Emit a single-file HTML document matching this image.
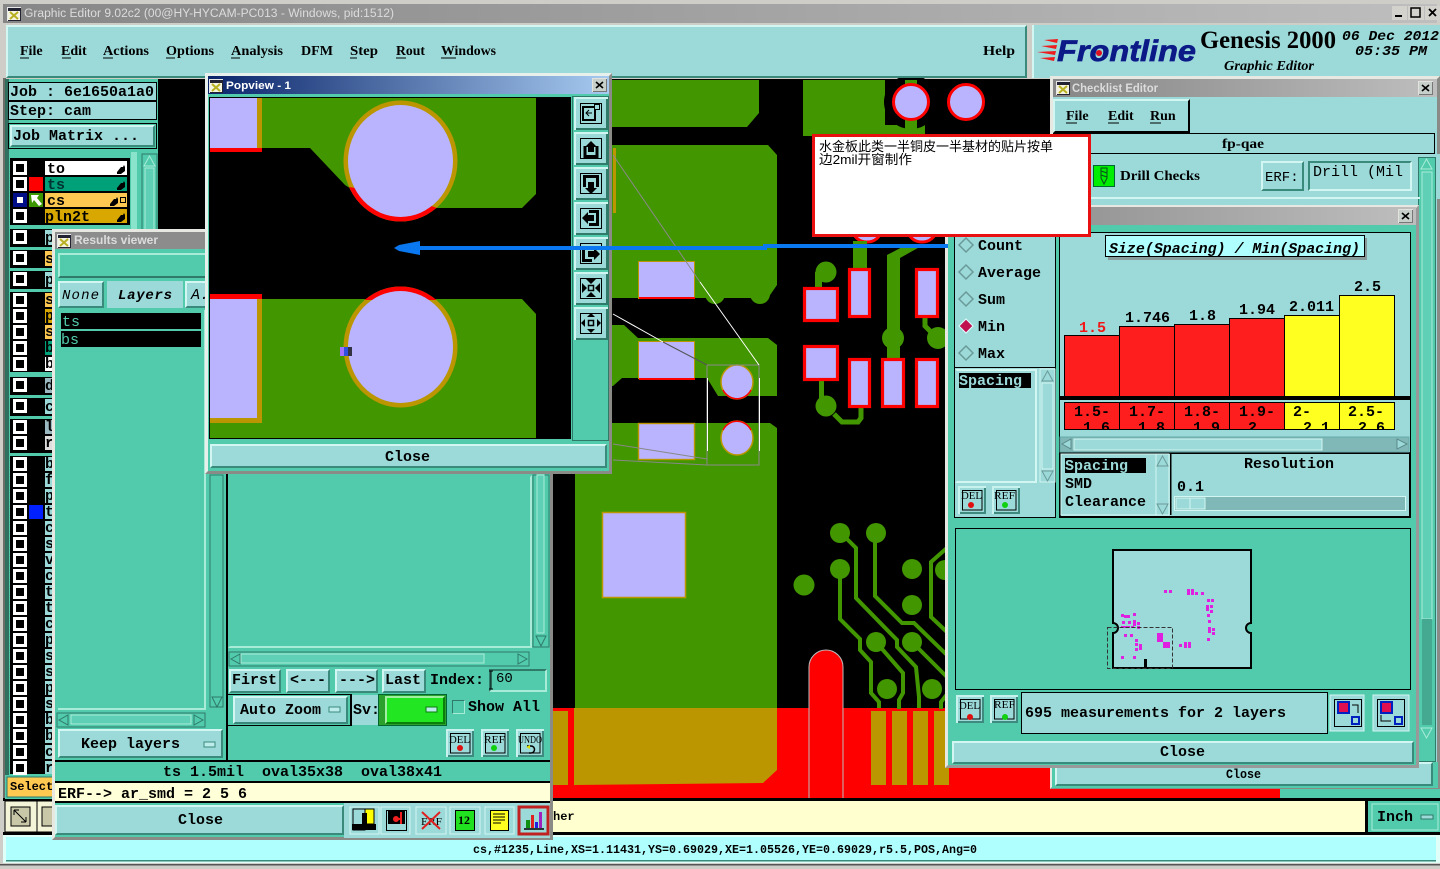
<!DOCTYPE html>
<html><head><meta charset="utf-8"><title>Graphic Editor</title>
<style>
*{box-sizing:border-box;margin:0;padding:0}
html,body{width:1440px;height:869px;overflow:hidden}
body{position:relative;background:#cfcdc8}
div{position:absolute}
svg{position:absolute;left:0;top:0;overflow:visible}
text{font:bold 15px "Liberation Mono",monospace;fill:#000;white-space:pre}
.se{font:bold 14px "Liberation Serif",serif}
.sa{font:bold 11px "Liberation Sans",sans-serif}
.t{background:#9cdada}
.m{background:#52cbad}
.b{background:#9cdada;border:2px solid;border-color:#d2f6f2 #3a8a7c #3a8a7c #d2f6f2}
.g{background:#52cbad;border:2px solid;border-color:#a8ecd8 #2f7a68 #2f7a68 #a8ecd8}
.s{background:#52cbad;border:2px solid;border-color:#2f7a68 #a8ecd8 #a8ecd8 #2f7a68}
.k{border:1px solid #000}
.w{background:#52cbad;border:3px solid;border-color:#e8e8e2 #8a8a86 #8a8a86 #e8e8e2}
</style></head><body>
<svg width="1440" height="869" viewBox="0 0 1440 869">
<defs>
<linearGradient id="gy"><stop offset="0" stop-color="#868686"/><stop offset="1" stop-color="#bebebe"/></linearGradient>
<linearGradient id="bl"><stop offset="0" stop-color="#0a246a"/><stop offset="1" stop-color="#a6caf0"/></linearGradient>
<g id="ico"><rect width="14" height="14" fill="#e8e8e8"/><rect x="1" y="1" width="13" height="13" fill="#223"/><rect x="1" y="4" width="12" height="9" fill="#f4f4e0"/><path d="M3 5l8 7M11 5l-8 7" stroke="#b8b020" stroke-width="2"/></g>
<g id="c"><rect width="14" height="14" fill="#fff"/><rect x="3" y="3" width="8" height="8" fill="#000"/></g>
<g id="x"><rect width="15" height="14" fill="#e4e2dc"/><rect x="1" y="1" width="14" height="13" fill="#777"/><rect x="1" y="1" width="13" height="12" fill="#c8d0cc"/><path d="M4 4l7 6M11 4l-7 6" stroke="#000" stroke-width="1.6"/></g>
<g id="ib"><rect width="28" height="28" fill="#c8f2ee"/><rect x="2" y="2" width="26" height="26" fill="#3f8a7e"/><rect x="2" y="2" width="24" height="24" fill="#9cdada"/><rect x="4.5" y="4.5" width="19.5" height="19.5" fill="none" stroke="#000"/></g>
<g id="tb"><rect width="34" height="33" fill="#d0f6f2"/><rect x="2" y="2" width="32" height="31" fill="#2f7a68"/><rect x="2" y="2" width="30" height="29" fill="#9cdada"/><rect x="6.5" y="6.5" width="21" height="20" fill="none" stroke="#000"/></g>
</defs>
<!-- title -->
<rect x="3" y="4" width="1434" height="19" fill="url(#gy)"/>
<use href="#ico" x="7" y="7"/>
<text class="sa" x="24" y="17" style="font-weight:normal;font-size:11.5px;fill:#dcdcdc" textLength="370" lengthAdjust="spacingAndGlyphs">Graphic Editor 9.02c2 (00@HY-HYCAM-PC013 - Windows, pid:1512)</text>
<rect x="1392" y="6" width="15" height="14" fill="#d4d2cc"/><rect x="1395" y="15" width="7" height="2" fill="#000"/>
<rect x="1408" y="6" width="16" height="14" fill="#d4d2cc"/><rect x="1411" y="8" width="9" height="9" fill="none" stroke="#000" stroke-width="1.5"/>
<rect x="1425" y="6" width="15" height="14" fill="#d4d2cc"/><path d="M1429 9l7 7M1436 9l-7 7" stroke="#000" stroke-width="1.8"/>
<!-- canvas + PCB -->
<rect x="158" y="79" width="1282" height="720" fill="#000"/>
<g fill="#429600">
<polygon points="560,80 759,80 759,113 747,127 560,127"/>
<polygon points="560,145 768,145 777,155 777,285 768,298 560,298"/>
<circle cx="715" cy="294" r="10"/><circle cx="760" cy="294" r="10"/>
<polygon points="560,325 624,325 638,338 768,338 777,345 777,396 718,396 707,378 622,378 613,386 560,386"/>
<polygon points="575,423 770,423 777,428 777,715 575,715"/>
<polygon points="803,80 885,80 885,125 925,125 925,136 812,136 803,136"/>
</g>
<circle cx="911" cy="102" r="27" fill="#000"/>
<rect x="905" y="80" width="12" height="60" fill="#429600"/>
<g fill="#bab4ff" stroke="#ff0000" stroke-width="3"><circle cx="911" cy="102" r="17.5"/><circle cx="966" cy="102" r="17.5"/>
<ellipse cx="867" cy="230" rx="14" ry="12"/><ellipse cx="922" cy="230" rx="14" ry="12"/>
</g>
<g fill="#429600">
<rect x="853" y="241" width="14" height="30"/>
<polygon points="908,244 925,244 900,258 900,362 887,362 887,255"/>
<circle cx="826" cy="272" r="10.5"/><rect x="815" y="272" width="7" height="16"/>
<circle cx="893" cy="338" r="11"/><circle cx="938" cy="338" r="11"/>
<circle cx="826" cy="406" r="10.5"/><rect x="819" y="381" width="5" height="20"/>
</g>
<path d="M834 414l8 8h16l3-4v-11M925 317v9l8 8" fill="none" stroke="#429600" stroke-width="5"/>
<g fill="#bab4ff" stroke="#ff0000" stroke-width="3.2">
<rect x="804.5" y="288.5" width="33" height="32"/><rect x="849.5" y="269.5" width="20" height="47"/><rect x="916.5" y="269.5" width="21" height="47"/>
<rect x="804.5" y="346.5" width="33" height="33"/><rect x="849.5" y="359.5" width="20" height="47"/><rect x="882.5" y="359.5" width="21" height="47"/><rect x="916.5" y="359.5" width="21" height="47"/>
</g>
<!-- red band -->
<rect x="553" y="708" width="727" height="90" fill="#ff0000"/>
<rect x="1280" y="788" width="160" height="11" fill="#52cbad"/>
<polygon points="574,708 777,708 777,770 763,783 574,785" fill="#bb9600"/>
<rect x="553" y="711" width="15" height="74" fill="#bb9600"/>
<g fill="#bb9600"><rect x="871" y="711" width="15" height="74"/><rect x="892" y="711" width="15" height="74"/><rect x="913" y="711" width="15" height="74"/><rect x="934" y="711" width="15" height="74"/></g>
<path d="M809 798V667a17 17 0 0 1 34 0V798" fill="#ff0000" stroke="#bdbdbd" stroke-width="1"/>
<!-- lower traces -->
<g fill="#429600"><circle cx="840" cy="533" r="10"/><circle cx="876" cy="533" r="10"/><circle cx="840" cy="569" r="10"/><circle cx="804" cy="585" r="10.5"/><circle cx="912" cy="569" r="10"/><circle cx="912" cy="605" r="10"/><circle cx="876" cy="642" r="10"/><circle cx="912" cy="642" r="10"/><circle cx="887" cy="689" r="10"/><circle cx="932" cy="689" r="10"/><circle cx="945" cy="570" r="10"/></g>
<g fill="none" stroke="#429600" stroke-width="4">
<path d="M847 539l9 9v50l41 42v7l19 20 3 30v11"/>
<path d="M875 533v63l27 27h12l34 33"/>
<path d="M840 570v49l20 20v11l11 12v31l8 9v6"/>
<path d="M876 642l27 31v20l-4 7v9"/>
<path d="M912 642l36 36"/>
<path d="M948 547l-17 15v55l17 16"/>
<path d="M948 693l-7 9v7"/>
</g>
<!-- pads -->
<g fill="#bab4ff">
<rect x="638.5" y="261.5" width="56" height="37" stroke="#bb9600"/><rect x="639" y="297" width="56" height="2" fill="#f00"/>
<rect x="638.5" y="341.5" width="56" height="37" stroke="#bb9600"/><rect x="639" y="378" width="56" height="2" fill="#f00"/>
<rect x="638.5" y="423.5" width="56" height="36" stroke="#bb9600" stroke-width="1.4"/>
<rect x="602.5" y="512.5" width="83" height="85" stroke="#bb9600" stroke-width="1.5"/>
<rect x="613" y="148" width="3" height="65" fill="#bb9600"/>
<ellipse cx="737" cy="382" rx="16" ry="17" stroke="#bb9600" stroke-width="1.5"/>
<ellipse cx="737" cy="438" rx="16" ry="17" stroke="#bb9600" stroke-width="1.5"/>
<path d="M723 390a16 17 0 0 0 28 0" fill="none" stroke="#f00" stroke-width="1.5"/>
<path d="M723 430a16 17 0 0 1 28 0" fill="none" stroke="#f00" stroke-width="1.5"/>
</g>
<g fill="none" stroke-width="1">
<path d="M707 365h52v100h-52z" stroke="#8a8a8a"/><path d="M707.5 378v73M759.5 378v73" stroke="#fff"/>
<path d="M613 155L700 282" stroke="#8a8a8a"/><path d="M700 282L759 365" stroke="#fff"/>
<path d="M613 314l50 28" stroke="#fff"/><path d="M663 342l44 23" stroke="#555"/>
<path d="M613 444l94 15M613 460l94 5" stroke="#888"/>
</g>
<!-- bottom bars -->
<rect x="3" y="798" width="1437" height="3" fill="#000"/>
<rect x="5" y="801" width="1360" height="31" fill="#ffffd0"/>
<rect x="1365" y="801" width="3" height="31" fill="#000"/>
<rect x="1368" y="801" width="72" height="31" fill="#52cbad"/>
<rect x="3" y="832" width="1437" height="3" fill="#000"/>
<rect x="3" y="835" width="1437" height="28" fill="#e0fff8"/>
<rect x="6" y="837" width="1430" height="24" fill="#b0ffff"/>
<rect x="6" y="860" width="1430" height="1.5" fill="#3a8a7c"/>
<rect x="0" y="864" width="1440" height="1.5" fill="#555"/>
<text x="473" y="853" style="font-size:12px" textLength="504" lengthAdjust="spacingAndGlyphs">cs,#1235,Line,XS=1.11431,YS=0.69029,XE=1.05526,YE=0.69029,r5.5,POS,Ang=0</text>
<text x="553" y="820" style="font-size:12px">her</text>
<rect x="1372" y="804" width="66" height="26" fill="#52cbad" stroke="#a8ecd8"/>
<text x="1377" y="821">Inch</text>
<rect x="1421" y="815" width="12" height="4" fill="#9cdada" stroke="#2f7a68"/>
<rect x="5" y="801" width="32" height="31" fill="#f4f4d8" stroke="#000"/><rect x="11" y="807" width="19" height="19" fill="#c8c8a8" stroke="#000"/><path d="M14 810l12 12M14 810h5M14 810v5M26 822h-5M26 822v-5" stroke="#000" fill="none"/>
<rect x="37" y="801" width="16" height="31" fill="#f4f4d8" stroke="#000"/><rect x="42" y="807" width="12" height="19" fill="#c8c8a8" stroke="#000"/>
</svg>

<!-- menu + logo -->
<div class="b" style="left:6px;top:25px;width:1021px;height:53px"></div>
<div class="t" style="left:1032px;top:25px;width:408px;height:53px;border-left:2px solid #d2f6f2"></div>
<svg width="1440" height="869" viewBox="0 0 1440 869">
<g class="mn">
<text class="se" x="20" y="55">File</text><text class="se" x="61" y="55">Edit</text><text class="se" x="103" y="55" textLength="46" lengthAdjust="spacingAndGlyphs">Actions</text><text class="se" x="166" y="55" textLength="48" lengthAdjust="spacingAndGlyphs">Options</text><text class="se" x="231" y="55" textLength="52" lengthAdjust="spacingAndGlyphs">Analysis</text><text class="se" x="301" y="55" textLength="32" lengthAdjust="spacingAndGlyphs">DFM</text><text class="se" x="350" y="55" textLength="28" lengthAdjust="spacingAndGlyphs">Step</text><text class="se" x="396" y="55" textLength="29" lengthAdjust="spacingAndGlyphs">Rout</text><text class="se" x="441" y="55" textLength="55" lengthAdjust="spacingAndGlyphs">Windows</text><text class="se" x="983" y="55" textLength="32" lengthAdjust="spacingAndGlyphs">Help</text>
</g>
<path d="M20 58h9M62 58h9M103 58h10M166 58h9M231 58h9M350 58h7M396 58h10M441 58h15" stroke="#000"/>
<g fill="#ee1c1c"><polygon points="1044,40 1058,39 1057,43"/><polygon points="1041,46 1057,45 1056,49"/><polygon points="1037,52 1056,51 1055,55"/><polygon points="1040,58 1055,57 1054,61"/></g>
<text x="1057" y="61" style="font:italic bold 30px 'Liberation Sans',sans-serif;fill:#0c1a88;stroke:#0c1a88;stroke-width:.7" textLength="139" lengthAdjust="spacingAndGlyphs">Frontline</text>
<circle cx="1099" cy="53" r="3" fill="#e01020"/>
<text class="se" x="1200" y="48" style="font-size:25px" textLength="136" lengthAdjust="spacingAndGlyphs">Genesis 2000</text>
<text class="se" x="1224" y="70" style="font-style:italic;font-size:14px" textLength="90" lengthAdjust="spacingAndGlyphs">Graphic Editor</text>
<text x="1342" y="40" style="font-style:italic;font-size:14px" textLength="97" lengthAdjust="spacingAndGlyphs">06 Dec 2012</text>
<text x="1355" y="55" style="font-style:italic;font-size:14px" textLength="72" lengthAdjust="spacingAndGlyphs">05:35 PM</text>
</svg>

<!-- left panel -->
<div style="left:3px;top:78px;width:3px;height:720px;background:#6c6c68"></div>
<div style="left:5px;top:79px;width:153px;height:720px;background:#52cbad;border-left:4px solid #2f6f5f"></div>
<div class="t k" style="left:8px;top:82px;width:149px;height:19px"></div>
<div class="t k" style="left:8px;top:101px;width:149px;height:19px"></div>
<div class="k" style="left:8px;top:123px;width:149px;height:26px"></div>
<div class="b" style="left:10px;top:125px;width:145px;height:22px"></div>
<svg width="1440" height="869" viewBox="0 0 1440 869">
<text x="10" y="96">Job : 6e1650a1a0</text>
<text x="10" y="115">Step: cam</text>
<text x="13" y="140">Job Matrix ...</text>
<g fill="#000"><rect x="10" y="158" width="120" height="67"/><rect x="10" y="229" width="42" height="18"/><rect x="10" y="250" width="42" height="18"/><rect x="10" y="271" width="42" height="18"/><rect x="10" y="292" width="42" height="80"/><rect x="10" y="377" width="42" height="18"/><rect x="10" y="398" width="42" height="18"/><rect x="10" y="419" width="42" height="34"/><rect x="10" y="456" width="42" height="318"/></g>
<rect x="131" y="152" width="6" height="80" fill="#8ae4cc"/>
<rect x="142" y="154" width="15" height="80" fill="#52cbad" stroke="#2f7a68"/><polygon points="149.500,156 155,166 144,166" fill="none" stroke="#a8ecd8"/><rect x="145" y="168" width="9" height="70" fill="#5fd0b6" stroke="#a8ecd8"/>
<g fill="#fff"><rect x="45" y="161" width="82" height="14"/></g>
<rect x="45" y="177" width="82" height="14" fill="#00a078"/><rect x="45" y="193" width="82" height="14" fill="#ffc850"/><rect x="45" y="209" width="82" height="14" fill="#d8a800"/>
<rect x="29" y="177" width="14" height="14" fill="#f00"/><rect x="29" y="193" width="14" height="14" fill="#3c9600"/><polygon points="31,195 39,195 37,198 42,204 39,206 34,200 32,203" fill="#fff"/>
<text x="47" y="173">to</text><text x="47" y="189" style="fill:#033">ts</text><text x="47" y="205">cs</text><text x="45" y="221">pln2t</text>
<g fill="#000"><path d="M117 172l4-5 2 0 1-2 1 2v4l-4 3h-4z M117 188l4-5 2 0 1-2 1 2v4l-4 3h-4z M117 220l4-5 2 0 1-2 1 2v4l-4 3h-4z M110 204l4-5 2 0 1-2 1 2v4l-4 3h-4z"/></g>
<rect x="120.500" y="197.500" width="5" height="5" fill="none" stroke="#000"/>
<use href="#c" x="13" y="161"/><use href="#c" x="13" y="177"/><use href="#c" x="13" y="209"/>
<rect x="13" y="193" width="14" height="14" fill="#000f88"/><rect x="17" y="197" width="6" height="6" fill="#fff"/>
<use href="#c" x="13" y="230"/><use href="#c" x="13" y="251"/><use href="#c" x="13" y="272"/><use href="#c" x="13" y="293"/><use href="#c" x="13" y="309"/><use href="#c" x="13" y="325"/><use href="#c" x="13" y="341"/><use href="#c" x="13" y="357"/><use href="#c" x="13" y="378"/><use href="#c" x="13" y="399"/><use href="#c" x="13" y="420"/><use href="#c" x="13" y="436"/>
<use href="#c" x="13" y="457"/><use href="#c" x="13" y="473"/><use href="#c" x="13" y="489"/><use href="#c" x="13" y="505"/><use href="#c" x="13" y="521"/><use href="#c" x="13" y="537"/><use href="#c" x="13" y="553"/><use href="#c" x="13" y="569"/><use href="#c" x="13" y="585"/><use href="#c" x="13" y="601"/><use href="#c" x="13" y="617"/><use href="#c" x="13" y="633"/><use href="#c" x="13" y="649"/><use href="#c" x="13" y="665"/><use href="#c" x="13" y="681"/><use href="#c" x="13" y="697"/><use href="#c" x="13" y="713"/><use href="#c" x="13" y="729"/><use href="#c" x="13" y="745"/><use href="#c" x="13" y="761"/>
<rect x="29" y="505" width="14" height="14" fill="#0020ff"/>
<g fill="#9cdada"><rect x="45" y="230" width="8" height="15"/><rect x="45" y="251" width="8" height="15" fill="#ffc850"/><rect x="45" y="272" width="8" height="15"/><rect x="45" y="293" width="8" height="14" fill="#ffc850"/><rect x="45" y="309" width="8" height="14" fill="#d8a800"/><rect x="45" y="325" width="8" height="14" fill="#ffc850"/><rect x="45" y="341" width="8" height="14" fill="#00a078"/><rect x="45" y="357" width="8" height="14" fill="#fff"/><rect x="45" y="378" width="8" height="15" fill="#9ab8c0"/><rect x="45" y="399" width="8" height="15"/><rect x="45" y="420" width="8" height="14" fill="#9ab8c0"/><rect x="45" y="436" width="8" height="14" fill="#ddd"/>
<rect x="45" y="457" width="8" height="14"/><rect x="45" y="473" width="8" height="14"/><rect x="45" y="489" width="8" height="14"/><rect x="45" y="505" width="8" height="14"/><rect x="45" y="521" width="8" height="14"/><rect x="45" y="537" width="8" height="14"/><rect x="45" y="553" width="8" height="14"/><rect x="45" y="569" width="8" height="14"/><rect x="45" y="585" width="8" height="14"/><rect x="45" y="601" width="8" height="14"/><rect x="45" y="617" width="8" height="14"/><rect x="45" y="633" width="8" height="14"/><rect x="45" y="649" width="8" height="14"/><rect x="45" y="665" width="8" height="14"/><rect x="45" y="681" width="8" height="14"/><rect x="45" y="697" width="8" height="14"/><rect x="45" y="713" width="8" height="14"/><rect x="45" y="729" width="8" height="14"/><rect x="45" y="745" width="8" height="14"/><rect x="45" y="761" width="8" height="13"/></g>
<g>
<text x="45" y="242">p</text><text x="45" y="263">s</text><text x="45" y="284">p</text><text x="45" y="304">s</text><text x="45" y="320">p</text><text x="45" y="336">s</text><text x="45" y="352">b</text><text x="45" y="368">b</text><text x="45" y="390">d</text><text x="45" y="411">c</text><text x="45" y="431">l</text><text x="45" y="447">r</text>
<text x="45" y="468">b</text><text x="45" y="484">f</text><text x="45" y="500">p</text><text x="45" y="516">t</text><text x="45" y="532">c</text><text x="45" y="548">s</text><text x="45" y="564">v</text><text x="45" y="580">c</text><text x="45" y="596">t</text><text x="45" y="612">t</text><text x="45" y="628">c</text><text x="45" y="644">p</text><text x="45" y="660">s</text><text x="45" y="676">s</text><text x="45" y="692">p</text><text x="45" y="708">s</text><text x="45" y="724">b</text><text x="45" y="740">b</text><text x="45" y="756">c</text><text x="45" y="772">r</text>
</g>
<rect x="5" y="775" width="48" height="24" fill="#52cbad"/><rect x="7" y="777" width="46" height="20" fill="#ffc850" stroke="#2f7a68"/><text x="10" y="790" style="font-size:12px">Select</text>
</svg>

<!-- checklist editor -->
<div class="w" style="left:1050px;top:76px;width:390px;height:713px;background:#9cdada;border-width:3px"></div>
<div style="left:1053px;top:79px;width:384px;height:18px;background:linear-gradient(90deg,#868686,#bebebe)"></div>
<div class="b" style="left:1053px;top:99px;width:137px;height:34px;border-bottom-color:#000;border-right-color:#000"></div>
<div class="t k" style="left:1053px;top:133px;width:382px;height:21px"></div>
<div class="m" style="left:1053px;top:154px;width:387px;height:45px;background:#9cdada"></div>
<div class="b" style="left:1261px;top:161px;width:43px;height:30px"></div>
<div class="b" style="left:1308px;top:161px;width:104px;height:30px;border-color:#3a8a7c #d2f6f2 #d2f6f2 #3a8a7c"></div>
<div class="m" style="left:1418px;top:157px;width:18px;height:605px;border:1px solid #2f7a68"></div>
<div class="m" style="left:1052px;top:762px;width:386px;height:26px"></div>
<div class="b" style="left:1055px;top:762px;width:378px;height:24px"></div>
<svg width="1440" height="869" viewBox="0 0 1440 869">
<use href="#ico" x="1056" y="81"/>
<text class="sa" x="1072" y="92" style="font-size:11.5px;fill:#dcdcdc" textLength="86" lengthAdjust="spacingAndGlyphs">Checklist Editor</text>
<use href="#x" x="1418" y="81"/>
<text class="se" x="1066" y="120">File</text><text class="se" x="1108" y="120">Edit</text><text class="se" x="1150" y="120">Run</text>
<path d="M1066 123h11M1108 123h11M1150 123h11" stroke="#000"/>
<text class="se" x="1222" y="148" textLength="42" lengthAdjust="spacingAndGlyphs">fp-qae</text>
<rect x="1093.500" y="165.500" width="21" height="21" fill="#00ee00" stroke="#063"/><path d="M1101 168h6v10l-3 6-3-6zM1101 171l6 2M1101 175l6 2" fill="none" stroke="#0a4a20"/>
<text class="se" x="1120" y="180" textLength="80" lengthAdjust="spacingAndGlyphs">Drill Checks</text>
<text x="1265" y="181" style="font-weight:normal;font-size:14px">ERF:</text>
<text x="1313" y="176" style="font-weight:normal">Drill (Mil</text>
<rect x="1053" y="197" width="367" height="2" fill="#d2f6f2"/>
<rect x="1422" y="172" width="10" height="447" fill="#5fd0b6" stroke="#a8ecd8"/>
<rect x="1422" y="619" width="10" height="106" fill="#45a890"/>
<polygon points="1426.500,159 1432,169 1421,169" fill="#52cbad" stroke="#a8ecd8"/>
<polygon points="1426.500,738 1432,728 1421,728" fill="#52cbad" stroke="#a8ecd8"/>
<text x="1226" y="778" style="font-size:12.500px" textLength="35" lengthAdjust="spacingAndGlyphs">Close</text>
</svg>

<!-- front analysis window -->
<div class="w" style="left:945px;top:205px;width:474px;height:563px;border-color:#e8e8e2 #999 #999 #e8e8e2"></div>
<div style="left:948px;top:207px;width:468px;height:18px;background:linear-gradient(90deg,#868686,#bebebe)"></div>
<div class="t k" style="left:954px;top:230px;width:102px;height:138px"></div>
<div class="t k" style="left:954px;top:367px;width:102px;height:151px"></div>
<div class="s" style="left:955px;top:369px;width:82px;height:114px;background:#9cdada;border-color:#d2f6f2 #d2f6f2 #d2f6f2 #9cdada"></div>
<div class="t k" style="left:1059px;top:232px;width:352px;height:223px"></div>
<div class="t k" style="left:1059px;top:452px;width:352px;height:66px;border-width:2px"></div>
<div class="m k" style="left:955px;top:528px;width:456px;height:162px"></div>
<div class="t k" style="left:1021px;top:692px;width:307px;height:42px"></div>
<div class="b" style="left:952px;top:741px;width:462px;height:23px"></div>
<svg width="1440" height="869" viewBox="0 0 1440 869">
<use href="#x" x="1398" y="209"/>
<g fill="#9cdada" stroke="#6a9a98" stroke-width="1.5"><polygon points="966,238 973,245 966,252 959,245"/><polygon points="966,265 973,272 966,279 959,272"/><polygon points="966,292 973,299 966,306 959,299"/><polygon points="966,346 973,353 966,360 959,353"/></g>
<polygon points="966,319 973,326 966,333 959,326" fill="#c01050" stroke="#dff"/>
<text x="978" y="250">Count</text><text x="978" y="277">Average</text><text x="978" y="304">Sum</text><text x="978" y="331">Min</text><text x="978" y="358">Max</text>
<rect x="959" y="373" width="72" height="15" fill="#000"/><text x="959" y="385" style="fill:#9cdada">Spacing</text>
<rect x="1040" y="369" width="15" height="113" fill="#9cdada" stroke="#d2f6f2"/><polygon points="1047.500,371 1053,381 1042,381" fill="#9cdada" stroke="#6a9a98"/><polygon points="1047.500,481 1053,471 1042,471" fill="#9cdada" stroke="#6a9a98"/><rect x="1042" y="383" width="11" height="86" fill="#9cdada" stroke="#d2f6f2"/>
<use href="#ib" x="958" y="486"/><use href="#ib" x="992" y="486"/>
<text class="se" x="961" y="499" style="font-weight:normal;font-size:11px" textLength="21" lengthAdjust="spacingAndGlyphs">DEL</text><circle cx="971" cy="505" r="3" fill="#e01010"/>
<text class="se" x="994" y="499" style="font-weight:normal;font-size:11px" textLength="21" lengthAdjust="spacingAndGlyphs">REF</text><circle cx="1005" cy="505" r="3" fill="#10d010"/>
<rect x="1108" y="238" width="259" height="22" fill="#808080" opacity=".7"/>
<rect x="1105.500" y="235.500" width="259" height="21" fill="#b0ffff" stroke="#000"/>
<text x="1109" y="253" style="font-style:italic;font-size:15px" textLength="251" lengthAdjust="spacingAndGlyphs">Size(Spacing) / Min(Spacing)</text>
<g stroke="#000">
<rect x="1064.500" y="335.500" width="55" height="61" fill="#fe1e1e"/><rect x="1119.500" y="326.500" width="55" height="70" fill="#fe1e1e"/><rect x="1174.500" y="324.500" width="55" height="72" fill="#fe1e1e"/><rect x="1229.500" y="318.500" width="55" height="78" fill="#fe1e1e"/><rect x="1284.500" y="315.500" width="55" height="81" fill="#ffff20"/><rect x="1339.500" y="295.500" width="55" height="101" fill="#ffff20"/>
<rect x="1064.500" y="402.500" width="55" height="27" fill="#fe1e1e"/><rect x="1119.500" y="402.500" width="55" height="27" fill="#fe1e1e"/><rect x="1174.500" y="402.500" width="55" height="27" fill="#fe1e1e"/><rect x="1229.500" y="402.500" width="55" height="27" fill="#fe1e1e"/><rect x="1284.500" y="402.500" width="55" height="27" fill="#ffff20"/><rect x="1339.500" y="402.500" width="55" height="27" fill="#ffff20"/>
</g>
<rect x="1059" y="396" width="352" height="4" fill="#000"/>
<text x="1079" y="332" style="fill:#f01818">1.5</text><text x="1125" y="322">1.746</text><text x="1189" y="320">1.8</text><text x="1239" y="314">1.94</text><text x="1289" y="311">2.011</text><text x="1354" y="291">2.5</text>
<clipPath id="lb"><rect x="1060" y="402" width="340" height="28"/></clipPath>
<g clip-path="url(#lb)"><text x="1074" y="416">1.5-</text><text x="1083" y="432">1.6</text><text x="1129" y="416">1.7-</text><text x="1138" y="432">1.8</text><text x="1184" y="416">1.8-</text><text x="1193" y="432">1.9</text><text x="1239" y="416">1.9-</text><text x="1248" y="432">2</text><text x="1293" y="416">2-</text><text x="1303" y="432">2.1</text><text x="1348" y="416">2.5-</text><text x="1358" y="432">2.6</text></g>
<rect x="1060" y="437" width="349" height="15" fill="#7fb8b6" stroke="#6aa"/><rect x="1074" y="439" width="248" height="11" fill="#9cdada" stroke="#d2f6f2"/>
<polygon points="1062,444 1071,439 1071,449" fill="#9cdada" stroke="#5a8a88"/><polygon points="1407,444 1397,439 1397,449" fill="#9cdada" stroke="#5a8a88"/>
<rect x="1061" y="454" width="95" height="61" fill="#9cdada" stroke="#d2f6f2"/>
<rect x="1065" y="458" width="81" height="15" fill="#000"/><text x="1065" y="470" style="fill:#9cdada">Spacing</text>
<text x="1065" y="488">SMD</text><text x="1065" y="506">Clearance</text>
<rect x="1156" y="454" width="13" height="61" fill="#9cdada" stroke="#d2f6f2"/><polygon points="1162.500,456 1168,466 1157,466" fill="#9cdada" stroke="#6a9a98"/><polygon points="1162.500,514 1168,504 1157,504" fill="#9cdada" stroke="#6a9a98"/>
<rect x="1170" y="454" width="1.500" height="61" fill="#000"/>
<text x="1244" y="468">Resolution</text><text x="1177" y="491">0.1</text>
<rect x="1174.500" y="496.500" width="231" height="14" fill="#7fb8b6" stroke="#d2f6f2"/><rect x="1176" y="498" width="14" height="11" fill="#9cdada" stroke="#d2f6f2"/><rect x="1190" y="498" width="15" height="11" fill="#9cdada" stroke="#d2f6f2"/>
<path d="M1113 623a5 5 0 0 1 0 10V668h138V633a5 5 0 0 1 0-10V550H1113z" fill="#9cdada" stroke="#000" stroke-width="2"/>
<rect x="1144" y="659" width="3" height="10" fill="#000"/>
<path d="M1164 590h3v3h-3zM1169 590h3v3h-3zM1187 589h3v6h-3zM1191 589h3v6h-3zM1195 592h3v3h-3zM1201 592h3v3h-3zM1207 599h3v3h-3zM1211 599h3v3h-3zM1206 605h3v6h-3zM1210 605h3v3h-3zM1210 610h3v3h-3zM1207 614h3v3h-3zM1208 620h3v3h-3zM1208 627h3v6h-3zM1212 628h3v3h-3zM1212 632h3v3h-3zM1207 638h3v3h-3zM1121 614h3v3h-3zM1124 615h3v3h-3zM1127 615h3v3h-3zM1133 613h3v3h-3zM1122 621h3v3h-3zM1128 621h3v3h-3zM1133 620h3v6h-3zM1137 622h3v3h-3zM1121 626h9v2h-9zM1131 626h3v2h-3zM1137 626h3v3h-3zM1124 634h3v3h-3zM1130 634h3v3h-3zM1135 639h3v3h-3zM1135 643h3v3h-3zM1139 644h3v6h-3zM1135 648h3v3h-3zM1157 633h6v9h-6zM1163 642h7v6h-7zM1179 644h3v3h-3zM1184 642h3v6h-3zM1188 642h3v6h-3zM1121 656h3v3h-3zM1133 656h3v3h-3z" fill="#e020e0"/>
<rect x="1107.500" y="627.500" width="65" height="41" fill="none" stroke="#333" stroke-dasharray="4 2"/>
<use href="#ib" x="956" y="695"/><use href="#ib" x="990" y="695"/>
<text class="se" x="959" y="709" style="font-weight:normal;font-size:11px" textLength="21" lengthAdjust="spacingAndGlyphs">DEL</text><circle cx="970" cy="717" r="3" fill="#e01010"/>
<text class="se" x="994" y="708" style="font-weight:normal;font-size:11px" textLength="21" lengthAdjust="spacingAndGlyphs">REF</text><circle cx="1005" cy="717" r="3" fill="#10d010"/>
<text x="1025" y="717">695 measurements for 2 layers</text>
<rect x="1330" y="695" width="34" height="36" fill="#9cdada" stroke="#d2f6f2"/><rect x="1334.500" y="699.500" width="27" height="27" fill="none" stroke="#000"/><rect x="1338" y="702" width="11" height="11" fill="#e01050" stroke="#0020c0" stroke-width="2"/><rect x="1352" y="717" width="7" height="7" fill="none" stroke="#0020c0" stroke-width="2"/><path d="M1352 705h6v8" fill="none" stroke="#000"/>
<rect x="1373" y="695" width="36" height="36" fill="#9cdada" stroke="#d2f6f2"/><rect x="1377.500" y="699.500" width="27" height="27" fill="none" stroke="#000"/><rect x="1381" y="702" width="11" height="11" fill="#e01050" stroke="#0020c0" stroke-width="2"/><rect x="1395" y="717" width="7" height="7" fill="none" stroke="#0020c0" stroke-width="2"/><path d="M1381 715v6h10" fill="none" stroke="#000"/>
<text x="1160" y="756">Close</text>
</svg>

<!-- results viewer -->
<div class="w" style="left:52px;top:229px;width:501px;height:611px;border-color:#e8e8e2 #8a8a86 #8a8a86 #e8e8e2"></div>
<div style="left:55px;top:232px;width:152px;height:17px;background:#8c8c8c"></div>
<div class="g" style="left:58px;top:253px;width:150px;height:25px"></div>
<div class="b" style="left:58px;top:281px;width:46px;height:27px"></div>
<div class="t" style="left:107px;top:281px;width:76px;height:27px"></div>
<div class="b" style="left:185px;top:281px;width:24px;height:27px"></div>
<div class="m" style="left:58px;top:310px;width:148px;height:400px;border-right:2px solid #a8ecd8;border-bottom:2px solid #a8ecd8"></div>
<div style="left:226px;top:470px;width:2px;height:290px;background:#000"></div>
<div class="s" style="left:228px;top:475px;width:304px;height:173px;border-color:#52cbad #a8ecd8 #a8ecd8 #52cbad"></div>
<div class="b" style="left:58px;top:729px;width:165px;height:29px"></div>
<div class="b" style="left:229px;top:669px;width:52px;height:24px"></div>
<div class="b" style="left:286px;top:669px;width:44px;height:24px"></div>
<div class="b" style="left:335px;top:669px;width:43px;height:24px"></div>
<div class="b" style="left:382px;top:669px;width:44px;height:24px"></div>
<div class="g" style="left:489px;top:669px;width:58px;height:23px;border-color:#2f7a68 #a8ecd8 #a8ecd8 #2f7a68"></div>
<div style="left:228px;top:694px;width:124px;height:32px;border-top:1px solid #000;border-bottom:1px solid #000;border-right:2px solid #000;background:#52cbad"></div>
<div class="b" style="left:233px;top:696px;width:115px;height:28px"></div>
<div class="t" style="left:352px;top:695px;width:26px;height:30px"></div>
<div style="left:378px;top:694px;width:69px;height:32px;background:#2ca02c;border:1px solid #063"></div>
<div style="left:385px;top:696px;width:60px;height:28px;background:#22e622;border:2px solid;border-color:#a0f0a0 #0a800a #0a800a #a0f0a0"></div>
<div class="s" style="left:452px;top:700px;width:13px;height:14px;background:#52cbad;border-width:1px"></div>
<div style="left:55px;top:760px;width:495px;height:23px;background:#52cbad;border-top:2px solid #000;border-bottom:2px solid #000"></div>
<div style="left:55px;top:783px;width:495px;height:20px;background:#ffffd8;border-bottom:2px solid #000"></div>
<div class="b" style="left:55px;top:805px;width:289px;height:30px"></div>
<div class="t" style="left:344px;top:803px;width:206px;height:35px"></div>
<svg width="1440" height="869" viewBox="0 0 1440 869">
<use href="#ico" x="57" y="234"/>
<text class="sa" x="74" y="244" style="font-size:11.5px;fill:#dcdcdc" textLength="84" lengthAdjust="spacingAndGlyphs">Results viewer</text>
<text x="62" y="299" style="font-weight:normal;font-style:italic;font-size:14px" textLength="37">None</text>
<text x="118" y="299" style="font-style:italic;font-size:14px" textLength="54">Layers</text>
<text x="191" y="299" style="font-style:italic;font-weight:normal">A.</text>
<rect x="61" y="313" width="140" height="16" fill="#000"/><rect x="61" y="331" width="140" height="16" fill="#000"/>
<text x="62" y="326" style="fill:#52cbad;font-weight:normal">ts</text><text x="61" y="344" style="fill:#52cbad;font-weight:normal">bs</text>
<rect x="57" y="713" width="148" height="14" fill="#52cbad" stroke="#2f7a68"/><rect x="71" y="715" width="120" height="9" fill="#5fd0b6" stroke="#a8ecd8"/><polygon points="59,720 68,715 68,725" fill="#52cbad" stroke="#2f7a68"/><polygon points="203,720 194,715 194,725" fill="#52cbad" stroke="#2f7a68"/>
<rect x="210" y="475" width="13" height="232" fill="#52cbad" stroke="#2f7a68"/><polygon points="217,707 212,697 222,697" fill="#52cbad" stroke="#2f7a68"/>
<rect x="533" y="475" width="16" height="172" fill="#52cbad" stroke="#2f7a68"/><rect x="537" y="475" width="7" height="158" fill="#5fd0b6" stroke="#a8ecd8"/><polygon points="541,646 536,636 546,636" fill="#52cbad" stroke="#2f7a68"/>
<rect x="229" y="652" width="300" height="14" fill="#52cbad" stroke="#2f7a68"/><rect x="241" y="654" width="243" height="9" fill="#5fd0b6" stroke="#a8ecd8"/><polygon points="231,659 240,654 240,664" fill="#52cbad" stroke="#2f7a68"/><polygon points="527,659 518,654 518,664" fill="#52cbad" stroke="#2f7a68"/>
<text x="81" y="748">Keep layers</text>
<rect x="204" y="742" width="11" height="5" fill="#bcecec" stroke="#3a8a7c"/>
<text x="232" y="684">First</text><text x="290" y="684">&lt;---</text><text x="339" y="684">---&gt;</text><text x="385" y="684">Last</text><text x="430" y="684">Index:</text>
<text x="496" y="682" style="font-weight:normal;font-size:14px">60</text><path d="M491 671v18M489 671h4M489 689h4" stroke="#000"/>
<text x="240" y="714">Auto Zoom</text><rect x="329" y="707" width="11" height="5" fill="#bcecec" stroke="#3a8a7c"/>
<text x="353" y="714">Sv:</text><rect x="426" y="707" width="11" height="5" fill="#bcecec" stroke="#0a800a"/>
<text x="468" y="711">Show All</text>
<use href="#ib" x="446" y="729"/><use href="#ib" x="481" y="729"/><use href="#ib" x="516" y="729"/>
<text class="se" x="449" y="743" style="font-weight:normal;font-size:11px" textLength="21" lengthAdjust="spacingAndGlyphs">DEL</text><circle cx="460" cy="748" r="3" fill="#e01010"/>
<text class="se" x="484" y="743" style="font-weight:normal;font-size:11px" textLength="21" lengthAdjust="spacingAndGlyphs">REF</text><circle cx="494" cy="748" r="3" fill="#10d010"/>
<text class="se" x="518" y="743" style="font-weight:normal;font-size:10px" textLength="24" lengthAdjust="spacingAndGlyphs">UNDO</text><path d="M527 746h4a3.500 3.500 0 0 1 0 7h-2" fill="none" stroke="#000" stroke-width="1.500"/><path d="M530 745l-4 2 4 2z" fill="#dd0"/>
<text x="163" y="776">ts 1.5mil  oval35x38  oval38x41</text>
<text x="58" y="798">ERF--&gt; ar_smd = 2 5 6</text>
<text x="178" y="824">Close</text>
<!-- bottom icons -->
<rect x="350" y="807" width="29" height="27" fill="#9cdada" stroke="#d2f6f2"/><rect x="353" y="809" width="12" height="21" fill="#9cdada" stroke="#000"/><rect x="365" y="809" width="9" height="15" fill="#ffff00" stroke="#000"/><path d="M352 830h24v-6h-9v-11h-5v11h-10z" fill="#000"/>
<rect x="381" y="807" width="29" height="27" fill="#9cdada" stroke="#d2f6f2"/><rect x="386.500" y="810.500" width="20" height="20" fill="#9cdada" stroke="#000"/><rect x="388" y="811" width="17" height="13" fill="#000"/><circle cx="396" cy="819" r="3" fill="#f02020"/><rect x="400" y="812" width="2" height="12" fill="#f02020"/><rect x="396" y="818" width="6" height="2" fill="#f02020"/>
<rect x="416" y="807" width="30" height="27" fill="#9cdada" stroke="#d2f6f2"/><text class="se" x="421" y="825" style="font-weight:normal;font-size:11px" textLength="21" lengthAdjust="spacingAndGlyphs">ERF</text><path d="M422 812l18 17M440 812l-18 17" stroke="#e02020" stroke-width="2"/>
<rect x="450" y="807" width="30" height="27" fill="#9cdada" stroke="#d2f6f2"/><rect x="455.500" y="810.500" width="19" height="20" fill="#20e020" stroke="#000"/><text class="se" x="458" y="824" style="font-size:12px">12</text>
<rect x="485" y="807" width="29" height="27" fill="#9cdada" stroke="#d2f6f2"/><rect x="490.500" y="810.500" width="18" height="20" fill="#ffff20" stroke="#000"/><path d="M493 814h12M493 817h12M493 820h12M493 823h8" stroke="#000"/>
<rect x="519" y="807" width="29" height="27" fill="#9cdada" stroke="#c02020" stroke-width="3"/><path d="M524 829h20" stroke="#000" stroke-width="1.500"/><rect x="526" y="820" width="4" height="8" fill="#109010"/><rect x="531" y="815" width="3" height="13" fill="#e02020"/><rect x="535" y="822" width="3" height="6" fill="#2020e0"/><rect x="539" y="812" width="3" height="16" fill="#a020c0"/>
</svg>

<!-- popview -->
<div class="w" style="left:205px;top:73px;width:407px;height:401px;border-color:#e8f0ec #8a8a86 #8a8a86 #e8f0ec"></div>
<div style="left:208px;top:76px;width:401px;height:18px;background:linear-gradient(90deg,#0a246a,#a6caf0)"></div>
<div class="b" style="left:210px;top:444px;width:397px;height:24px"></div>
<svg width="1440" height="869" viewBox="0 0 1440 869">
<use href="#ico" x="209" y="79"/>
<text class="sa" x="226" y="89" style="fill:#fff" textLength="65" lengthAdjust="spacingAndGlyphs">Popview - 1</text>
<use href="#x" x="592" y="78"/>
<rect x="209" y="97" width="362" height="342" fill="#000"/>
<polygon points="262,98 536,98 536,194 522,208 380,208 345,185 310,148 262,148" fill="#429600"/>
<polygon points="210,299 522,299 536,314 536,438 210,438" fill="#429600"/>
<rect x="210" y="98" width="47" height="50" fill="#bab4ff"/><rect x="257" y="98" width="5" height="50" fill="#bb9600"/><rect x="210" y="148" width="52" height="4" fill="#f00"/>
<rect x="210" y="299" width="47" height="119" fill="#bab4ff"/><rect x="257" y="299" width="5" height="124" fill="#bb9600"/><rect x="210" y="418" width="52" height="5" fill="#bb9600"/><rect x="210" y="294" width="52" height="5" fill="#f00"/>
<clipPath id="r1"><polygon points="330,170 349,187 400,195 437,208 470,208 470,240 330,240"/></clipPath>
<clipPath id="r2"><rect x="340" y="280" width="110" height="20"/></clipPath>
<ellipse cx="400.500" cy="161" rx="57" ry="60.500" fill="#bb9600"/>
<ellipse cx="400.500" cy="161" rx="57" ry="60.500" fill="#f00" clip-path="url(#r1)"/>
<ellipse cx="400.500" cy="161" rx="52.500" ry="56" fill="#bab4ff"/>
<ellipse cx="400.500" cy="347" rx="57" ry="60.500" fill="#bb9600"/>
<ellipse cx="400.500" cy="347" rx="57" ry="60.500" fill="#f00" clip-path="url(#r2)"/>
<ellipse cx="400.500" cy="347" rx="52.500" ry="56" fill="#bab4ff"/>
<rect x="340" y="347" width="4" height="9" fill="#a070ff"/><rect x="344" y="347" width="4" height="9" fill="#3050e0"/><rect x="348" y="347" width="4" height="9" fill="#334"/>
<rect x="572" y="96" width="37" height="345" fill="#2f7a68"/>
<rect x="573" y="97" width="35" height="343" fill="#52cbad"/>
<use href="#tb" x="574" y="97"/><use href="#tb" x="574" y="132"/><use href="#tb" x="574" y="167"/><use href="#tb" x="574" y="202"/><use href="#tb" x="574" y="237"/><use href="#tb" x="574" y="272"/><use href="#tb" x="574" y="307"/>
<rect x="583" y="107" width="12" height="13" fill="none" stroke="#000" stroke-width="2"/><path d="M592 113h-6M589 110l-3 3 3 3" fill="none" stroke="#000"/><rect x="594.500" y="104.500" width="5" height="5" fill="#9cdada" stroke="#000"/>
<path d="M583.500 146v12h15v-12h-3v9h-9v-9z" fill="#000"/><path d="M591 141l6 6h-3v5h-6v-5h-3z" fill="#000"/>
<path d="M583 175h16v12h-3v-9h-10v9h-3z" fill="#000"/><path d="M591 194l-6-6h3v-6h6v6h3z" fill="#000"/>
<path d="M589 210h10v16h-10v-3h7v-10h-7z" fill="#000"/><path d="M582 218l6-6v3h6v6h-6v3z" fill="#000"/>
<path d="M592 246h-10v16h10v-3h-7v-10h7z" fill="#000"/><path d="M600 254l-6-6v3h-6v6h6v3z" fill="#000"/>
<rect x="588.500" y="285.500" width="5" height="5" fill="none" stroke="#000" stroke-width="1.500"/><path d="M591 284l-5-5h10zM591 292l-5 5h10zM587 288l-5-5v10zM595 288l5-5v10z" fill="#000"/>
<rect x="588.500" y="320.500" width="5" height="5" fill="none" stroke="#000" stroke-width="1.500"/><path d="M591 313l-4 4h8zM591 333l-4-4h8zM581 323l4-4v8zM601 323l-4-4v8z" fill="#000"/>
<text x="385" y="461">Close</text>
</svg>

<!-- overlay: arrow + note -->
<svg width="1440" height="869" viewBox="0 0 1440 869">
<path d="M419 248H765V246H948" fill="none" stroke="#0a78f0" stroke-width="4"/>
<polygon points="394,248 399,245 420,241 420,255 399,251" fill="#0a78f0"/>
<rect x="813.500" y="135.500" width="276" height="100" fill="#fff" stroke="#e81010" stroke-width="3"/>
<text x="819" y="151" style="font:normal 13px 'Liberation Sans','Noto Sans CJK SC',sans-serif" textLength="234" lengthAdjust="spacingAndGlyphs">水金板此类一半铜皮一半基材的贴片按单</text>
<text x="819" y="164" style="font:normal 13px 'Liberation Sans','Noto Sans CJK SC',sans-serif" textLength="93" lengthAdjust="spacingAndGlyphs">边2mil开窗制作</text>
</svg>
</body></html>
